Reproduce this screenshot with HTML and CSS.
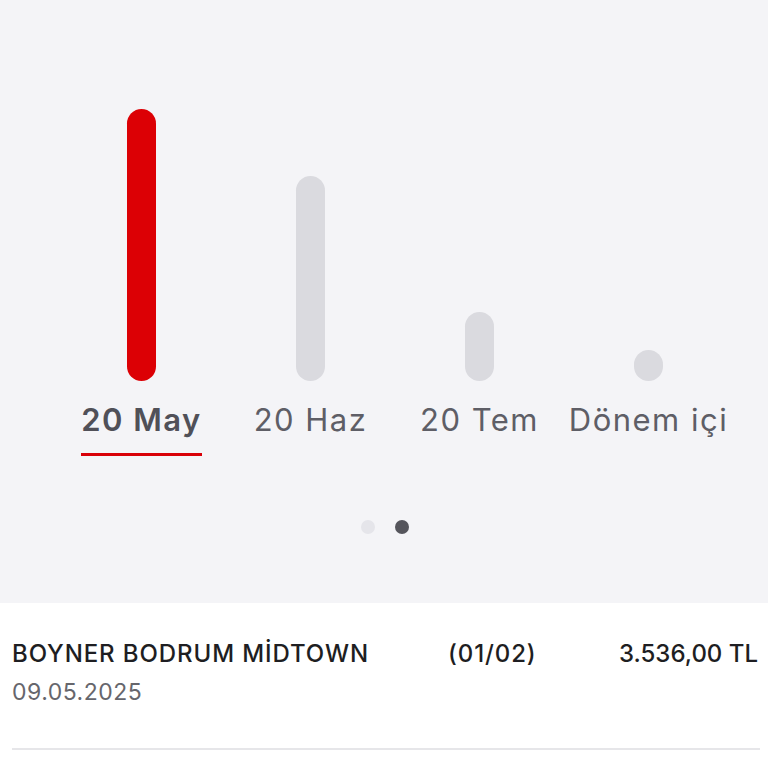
FILE: index.html
```html
<!DOCTYPE html>
<html lang="tr">
<head>
<meta charset="utf-8">
<link rel="stylesheet" href="styles.css">
</head>
<body>
<section class="chart">
  <div class="bars">
    <div class="col"><div class="bar active" style="height:272px"></div></div>
    <div class="col"><div class="bar" style="height:205px"></div></div>
    <div class="col"><div class="bar" style="height:69px"></div></div>
    <div class="col"><div class="bar" style="height:31px"></div></div>
  </div>
  <div class="labels">
    <div class="col"><span class="label selected">20 May</span></div>
    <div class="col"><span class="label">20 Haz</span></div>
    <div class="col"><span class="label">20 Tem</span></div>
    <div class="col"><span class="label">Dönem içi</span></div>
  </div>
  <div class="dots">
    <span class="dot"></span>
    <span class="dot current"></span>
  </div>
</section>
<section class="list">
  <div class="row">
    <div class="main">
      <div class="name">BOYNER BODRUM MİDTOWN</div>
      <div class="date">09.05.2025</div>
    </div>
    <div class="inst">(01/02)</div>
    <div class="amount">3.536,00 TL</div>
  </div>
  <div class="divider"></div>
</section>
</body>
</html>
```
FILE: styles.css
```css
* { box-sizing: border-box; }
html, body { margin: 0; padding: 0; }
body {
  background: #ffffff;
  font-family: "Inter", "Noto Sans", sans-serif;
  width: 768px;
  height: 768px;
  overflow: hidden;
}
.chart {
  background: #f4f4f7;
  height: 603px;
  padding-top: 109px;
}
.bars, .labels {
  display: grid;
  grid-template-columns: repeat(4, 169px);
  margin-left: 57px;
}
.bars {
  height: 272px;
  align-items: end;
}
.bars .col {
  display: flex;
  justify-content: center;
  align-items: flex-end;
  height: 100%;
}
.bar {
  width: 29px;
  border-radius: 15px;
  background: #dadadf;
}
.bar.active { background: #dc0005; }
.labels {
  margin-top: 19px;
}
.labels .col {
  display: flex;
  justify-content: center;
}
.label {
  display: inline-block;
  font-size: 31px;
  line-height: 40px;
  letter-spacing: 1.5px;
  color: #5e5e66;
  white-space: nowrap;
  padding-bottom: 13px;
  border-bottom: 3px solid transparent;
}
.label.selected {
  font-weight: 600;
  color: #505058;
  border-bottom-color: #d90008;
}
.dots {
  display: flex;
  justify-content: center;
  gap: 20px;
  margin-top: 64px;
  padding-left: 2px;
}
.dot {
  width: 14px;
  height: 14px;
  border-radius: 50%;
  background: #e5e5ea;
}
.dot.current { background: #55555c; }
.list {
  padding-top: 36px;
}
.row {
  display: grid;
  grid-template-columns: 436px 1fr auto;
  padding: 0 10px 0 12px;
  align-items: start;
}
.name {
  font-size: 24px;
  line-height: 30px;
  font-weight: 500;
  letter-spacing: 0.9px;
  color: #1e1e22;
  white-space: nowrap;
}
.date {
  font-size: 23px;
  line-height: 30px;
  letter-spacing: 0.5px;
  margin-top: 8px;
  color: #66666c;
}
.inst, .amount {
  font-size: 24px;
  line-height: 30px;
  font-weight: 500;
  color: #1e1e22;
}
.inst { letter-spacing: 0.9px; }
.divider {
  margin: 41px 8px 0 12px;
  height: 2px;
  background: #e6e6e9;
}
```
